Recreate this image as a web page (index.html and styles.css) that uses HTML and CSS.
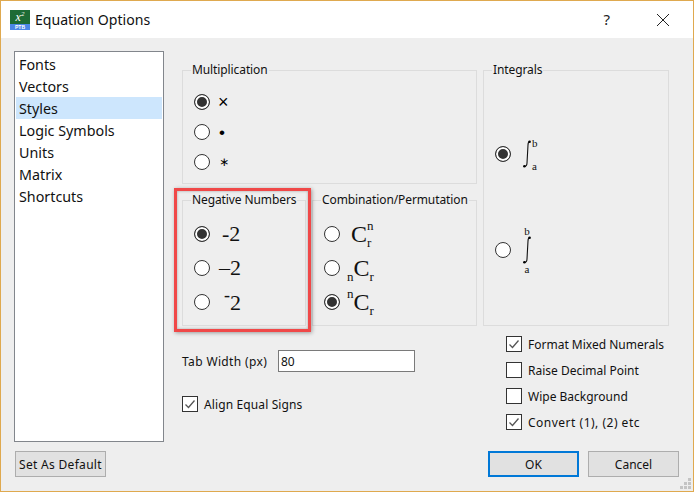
FILE: index.html
```html
<!DOCTYPE html>
<html lang="en">
<head>
<meta charset="utf-8">
<title>Equation Options</title>
<link rel="stylesheet" href="styles.css">
</head>
<body>
<div class="window">
  <header class="titlebar">
    <span class="app-icon"><span class="app-x">x<sup>2</sup></span><span class="app-tag">PTB</span></span>
    <span class="title">Equation Options</span>
    <span class="help">?</span>
    <svg class="close" width="12" height="12" viewBox="0 0 12 12"><path d="M0 0L12 12M12 0L0 12" stroke="#222" stroke-width="1" fill="none"/></svg>
  </header>
  <main class="content">
    <aside class="sidebar">
      <ul class="list">
        <li>Fonts</li>
        <li>Vectors</li>
        <li class="selected">Styles</li>
        <li>Logic Symbols</li>
        <li>Units</li>
        <li>Matrix</li>
        <li>Shortcuts</li>
      </ul>
      <button class="btn default-btn" type="button">Set As Default</button>
    </aside>
    <section class="panel">
      <div class="groups">
        <fieldset class="group multiplication">
          <legend>Multiplication</legend>
          <label class="opt"><input type="radio" name="mul" checked><span class="sym sym-times">×</span></label>
          <label class="opt"><input type="radio" name="mul"><span class="sym sym-dot">•</span></label>
          <label class="opt"><input type="radio" name="mul"><span class="sym sym-star">∗</span></label>
        </fieldset>
        <fieldset class="group integrals">
          <legend>Integrals</legend>
          <label class="opt opt-int"><input type="radio" name="int" checked>
            <span class="int int-side">
              <svg width="8" height="28" viewBox="0 0 8 28"><path d="M7 1.5C5.5 1.5 5 2.5 5 5L4 23C4 25.5 3 26.5 1 26.5" stroke="#111" stroke-width="1.1" fill="none"/><circle cx="6.6" cy="1.8" r="1.3"/><circle cx="1.4" cy="26.2" r="1.3"/></svg>
              <span class="int-limits"><span>b</span><span>a</span></span>
            </span>
          </label>
          <label class="opt opt-int"><input type="radio" name="int">
            <span class="int int-stack">
              <span>b</span>
              <svg width="8" height="28" viewBox="0 0 8 28"><path d="M7 1.5C5.5 1.5 5 2.5 5 5L4 23C4 25.5 3 26.5 1 26.5" stroke="#111" stroke-width="1.1" fill="none"/><circle cx="6.6" cy="1.8" r="1.3"/><circle cx="1.4" cy="26.2" r="1.3"/></svg>
              <span>a</span>
            </span>
          </label>
        </fieldset>
        <fieldset class="group negative">
          <legend>Negative Numbers</legend>
          <label class="opt opt-tall"><input type="radio" name="neg" checked><span class="math neg-a">-2</span></label>
          <label class="opt opt-tall"><input type="radio" name="neg"><span class="math neg-b">–2</span></label>
          <label class="opt opt-tall"><input type="radio" name="neg"><span class="math neg-c"><span class="raised">-</span>2</span></label>
        </fieldset>
        <fieldset class="group combination">
          <legend>Combination/Permutation</legend>
          <label class="opt opt-tall"><input type="radio" name="comb"><span class="math cnr cnr-a">C<span class="scripts"><span>n</span><span>r</span></span></span></label>
          <label class="opt opt-tall"><input type="radio" name="comb"><span class="math cnr cnr-b"><span class="scripts end"><span>n</span></span>C<span class="scripts end"><span>r</span></span></span></label>
          <label class="opt opt-tall"><input type="radio" name="comb" checked><span class="math cnr cnr-b"><span class="scripts"><span>n</span></span>C<span class="scripts end"><span>r</span></span></span></label>
        </fieldset>
      </div>
      <div class="lower">
        <div class="lower-left">
          <label class="tab-row"><span class="tab-label">Tab Width (px)</span><input class="tab-input" type="text" value="80"></label>
          <label class="check"><input type="checkbox" checked><span class="slight">Align Equal Signs</span></label>
        </div>
        <div class="lower-right">
          <label class="check"><input type="checkbox" checked><span>Format Mixed Numerals</span></label>
          <label class="check"><input type="checkbox"><span>Raise Decimal Point</span></label>
          <label class="check"><input type="checkbox"><span>Wipe Background</span></label>
          <label class="check"><input type="checkbox" checked><span class="wide">Convert (1), (2) etc</span></label>
        </div>
      </div>
      <div class="actions">
        <button class="btn primary" type="button">OK</button>
        <button class="btn" type="button">Cancel</button>
      </div>
    </section>
  </main>
  <div class="highlight"></div>
  <svg class="grip" width="12" height="12" viewBox="0 0 12 12" fill="#c4c4c4"><rect x="8" y="0" width="3" height="3"/><rect x="4" y="4" width="3" height="3"/><rect x="8" y="4" width="3" height="3"/><rect x="0" y="8" width="3" height="3"/><rect x="4" y="8" width="3" height="3"/><rect x="8" y="8" width="3" height="3"/></svg>
</div>
</body>
</html>
```
FILE: styles.css
```css
* { box-sizing: border-box; }
html, body { margin: 0; padding: 0; }
body {
  width: 694px;
  height: 492px;
  overflow: hidden;
  font-family: "Noto Sans", "Open Sans", sans-serif;
  font-size: 12px;
  color: #111;
}
.window {
  position: relative;
  width: 694px;
  height: 492px;
  display: flex;
  flex-direction: column;
  border: 1px solid #dfa94f;
  background: #eeeeee;
}
.titlebar {
  flex: none;
  height: 37px;
  background: #fff;
  display: flex;
  align-items: center;
  padding-left: 9px;
}
.app-icon {
  width: 20px;
  height: 20px;
  display: flex;
  flex-direction: column;
  background: #1d6b35;
  color: #fff;
  font-family: "Liberation Serif", serif;
}
.app-x {
  flex: 1;
  font-size: 12px;
  font-style: italic;
  line-height: 14px;
  text-align: center;
}
.app-x sup { font-size: 7px; line-height: 0; }
.app-tag {
  height: 6px;
  background: #4b87e6;
  font: bold 5px/6px "Liberation Sans", sans-serif;
  text-align: center;
}
.title {
  margin: 0 0 0 5px;
  font-size: 14.1px;
  color: #111;
}
.help {
  margin: -2px 0 0 auto;
  font-size: 15px;
  color: #222;
}
.close { margin: 0 24px 0 47px; }
.content {
  flex: 1;
  display: flex;
  padding: 13px 14px 14px 13px;
  min-height: 0;
}
.sidebar {
  flex: none;
  width: 150px;
  display: flex;
  flex-direction: column;
  align-items: flex-start;
}
.list {
  list-style: none;
  margin: 0;
  padding: 1px;
  width: 150px;
  height: 391px;
  background: #fff;
  border: 1px solid #82868c;
  font-size: 14.3px;
}
.list li {
  height: 22px;
  line-height: 24px;
  padding-left: 3px;
}
.list .selected { background: #cde6fd; }
.btn {
  width: 91px;
  height: 26px;
  padding: 0;
  font: inherit;
  color: #111;
  background: #e1e1e1;
  border: 1px solid #adadad;
}
.default-btn { margin: 9px 0 0 1px; letter-spacing: 0.3px; }
.primary { border: 2px solid #0078d7; }
.panel {
  flex: 1;
  margin-left: 18px;
  padding-top: 11px;
  display: flex;
  flex-direction: column;
}
.groups {
  display: grid;
  grid-template-columns: 124px 165px 186px;
  grid-template-rows: 122px 134px;
  column-gap: 6px;
  row-gap: 8px;
}
.group {
  margin: 0;
  min-width: 0;
  padding: 9px 0 0 11px;
  border: 1px solid #dcdcdc;
}
.group legend {
  padding: 0 1px;
  margin-left: -3px;
  line-height: 16px;
  white-space: nowrap;
  letter-spacing: -0.1px;
}
.multiplication { grid-column: 1 / 3; }
.integrals { grid-column: 3; grid-row: 1 / 3; padding-top: 28px; }
.opt {
  display: flex;
  align-items: center;
  height: 30px;
}
.opt-tall { height: 34px; }
.opt-int { height: 96px; }
input[type="radio"],
input[type="checkbox"] {
  appearance: none;
  flex: none;
  margin: 0;
  width: 16px;
  height: 16px;
  background: #fff;
  border: 1px solid #333;
}
input[type="radio"] { border-radius: 50%; }
input[type="radio"]:checked {
  background: #333;
  box-shadow: inset 0 0 0 2px #fff;
}
input[type="checkbox"]:checked {
  background: #fff url("data:image/svg+xml,%3Csvg xmlns='http://www.w3.org/2000/svg' width='14' height='14'%3E%3Cpath d='M2.5 7.5L5.5 10.5L11.5 3.5' stroke='%23555' stroke-width='1.3' fill='none'/%3E%3C/svg%3E") center no-repeat;
}
.sym {
  font-family: "Liberation Sans", "DejaVu Sans", sans-serif;
  color: #000;
  line-height: 1;
}
.sym-times { margin-left: 8px; font-size: 18px; }
.sym-dot { margin-left: 9px; font-size: 17px; }
.sym-star { margin-left: 9px; font-size: 12px; }
.math {
  font-family: "Liberation Serif", serif;
  font-size: 22px;
  line-height: 24px;
  color: #111;
}
.neg-a { margin-left: 12px; }
.neg-b { margin-left: 9px; }
.neg-c { margin-left: 14px; }
.raised {
  display: inline-block;
  font-size: 18px;
  line-height: 10px;
  vertical-align: 9px;
}
.cnr {
  display: inline-flex;
  align-items: stretch;
  height: 30px;
  line-height: 30px;
  font-size: 24px;
}
.cnr-a { margin-left: 11px; }
.cnr-b { margin-left: 7px; }
.scripts {
  display: flex;
  flex-direction: column;
  justify-content: space-between;
  font-size: 13px;
  line-height: 13px;
}
.scripts.end { justify-content: flex-end; }
.int {
  font-family: "Liberation Serif", serif;
  font-size: 11px;
  line-height: 10px;
  color: #111;
}
.int svg { display: block; }
.int-side {
  display: flex;
  margin-left: 12px;
  margin-top: -1px;
}
.int-limits {
  display: flex;
  flex-direction: column;
  justify-content: space-between;
  margin: -2px 0 -3px 1px;
}
.int-stack {
  display: flex;
  flex-direction: column;
  align-items: center;
  margin-left: 12px;
  margin-top: -1px;
}
.lower {
  display: flex;
}
.lower-left {
  flex: none;
  width: 324px;
  padding-top: 24px;
  display: flex;
  flex-direction: column;
  gap: 24px;
}
.lower-right {
  padding-top: 10px;
  display: flex;
  flex-direction: column;
  gap: 10px;
}
.tab-row {
  display: flex;
  align-items: center;
  height: 22px;
}
.tab-label {
  flex: none;
  width: 96px;
  letter-spacing: 0.36px;
}
.tab-input {
  width: 137px;
  height: 22px;
  padding: 0 2px;
  font: inherit;
  color: #111;
  background: #fff;
  border: 1px solid #7a7a7a;
  outline: none;
}
.check {
  display: flex;
  align-items: center;
  gap: 6px;
  height: 16px;
  white-space: nowrap;
}
.slight { letter-spacing: 0.12px; }
.wide { letter-spacing: 0.5px; }
.actions {
  margin-top: auto;
  display: flex;
  justify-content: flex-end;
  gap: 9px;
}
.highlight {
  position: absolute;
  left: 173px;
  top: 187px;
  width: 137px;
  height: 144px;
  border: 3px solid #f04848;
  box-shadow: 1px 1px 4px rgba(0,0,0,.35), inset 0 0 3px rgba(0,0,0,.3);
  pointer-events: none;
}
.grip {
  position: absolute;
  right: 1px;
  bottom: 1px;
}
```
